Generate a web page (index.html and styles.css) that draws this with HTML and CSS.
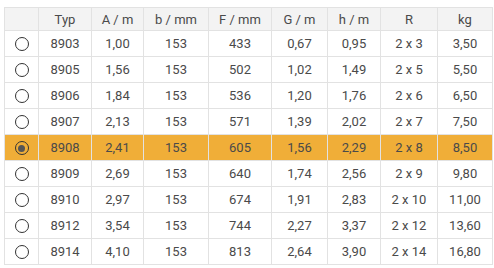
FILE: index.html
```html
<!DOCTYPE html>
<html lang="de">
<head>
    <meta charset="UTF-8">
    <title>Typen</title>
    <link rel="stylesheet" href="styles.css">
</head>
<body>
    <table class="typen">
        <colgroup>
            <col style="width:34px"><col style="width:53px"><col style="width:52px">
            <col style="width:65px"><col style="width:63px"><col style="width:56px">
            <col style="width:53px"><col style="width:57px"><col style="width:55px">
        </colgroup>
        <tr>
            <th></th><th>Typ</th><th>A / m</th><th>b / mm</th><th>F / mm</th>
            <th>G / m</th><th>h / m</th><th>R</th><th>kg</th>
        </tr>
        <tr><td><span class="radio"></span></td><td>8903</td><td>1,00</td><td>153</td><td>433</td><td>0,67</td><td>0,95</td><td>2 x 3</td><td>3,50</td></tr>
        <tr><td><span class="radio"></span></td><td>8905</td><td>1,56</td><td>153</td><td>502</td><td>1,02</td><td>1,49</td><td>2 x 5</td><td>5,50</td></tr>
        <tr><td><span class="radio"></span></td><td>8906</td><td>1,84</td><td>153</td><td>536</td><td>1,20</td><td>1,76</td><td>2 x 6</td><td>6,50</td></tr>
        <tr><td><span class="radio"></span></td><td>8907</td><td>2,13</td><td>153</td><td>571</td><td>1,39</td><td>2,02</td><td>2 x 7</td><td>7,50</td></tr>
        <tr class="aktiv"><td><span class="radio an"></span></td><td>8908</td><td>2,41</td><td>153</td><td>605</td><td>1,56</td><td>2,29</td><td>2 x 8</td><td>8,50</td></tr>
        <tr><td><span class="radio"></span></td><td>8909</td><td>2,69</td><td>153</td><td>640</td><td>1,74</td><td>2,56</td><td>2 x 9</td><td>9,80</td></tr>
        <tr><td><span class="radio"></span></td><td>8910</td><td>2,97</td><td>153</td><td>674</td><td>1,91</td><td>2,83</td><td>2 x 10</td><td>11,00</td></tr>
        <tr><td><span class="radio"></span></td><td>8912</td><td>3,54</td><td>153</td><td>744</td><td>2,27</td><td>3,37</td><td>2 x 12</td><td>13,60</td></tr>
        <tr><td><span class="radio"></span></td><td>8914</td><td>4,10</td><td>153</td><td>813</td><td>2,64</td><td>3,90</td><td>2 x 14</td><td>16,80</td></tr>
    </table>
</body>
</html>
```

FILE: styles.css
```css
body {
    margin: 0;
    padding: 7px 0 0 4px;
    background: #ffffff;
    font-family: Roboto, "Liberation Sans", sans-serif;
    font-size: 13px;
    color: #4a4a4a;
}
.typen {
    border-collapse: collapse;
    table-layout: fixed;
    width: 488px;
}
.typen th, .typen td {
    border: 1px solid #e2e2e2;
    padding: 0;
    text-align: center;
    font-weight: normal;
}
.typen th {
    background-color: #f3f3f3;
    height: 22px;
}
.typen td {
    height: 25px;
}
.aktiv td {
    background-color: #f0ae38;
}
.radio {
    display: inline-block;
    width: 12px;
    height: 12px;
    border: 1.2px solid #333333;
    border-radius: 50%;
    vertical-align: middle;
    position: relative;
}
.radio.an::after {
    content: "";
    position: absolute;
    left: 2.5px;
    top: 2.5px;
    width: 7px;
    height: 7px;
    border-radius: 50%;
    background: #555555;
}
```
